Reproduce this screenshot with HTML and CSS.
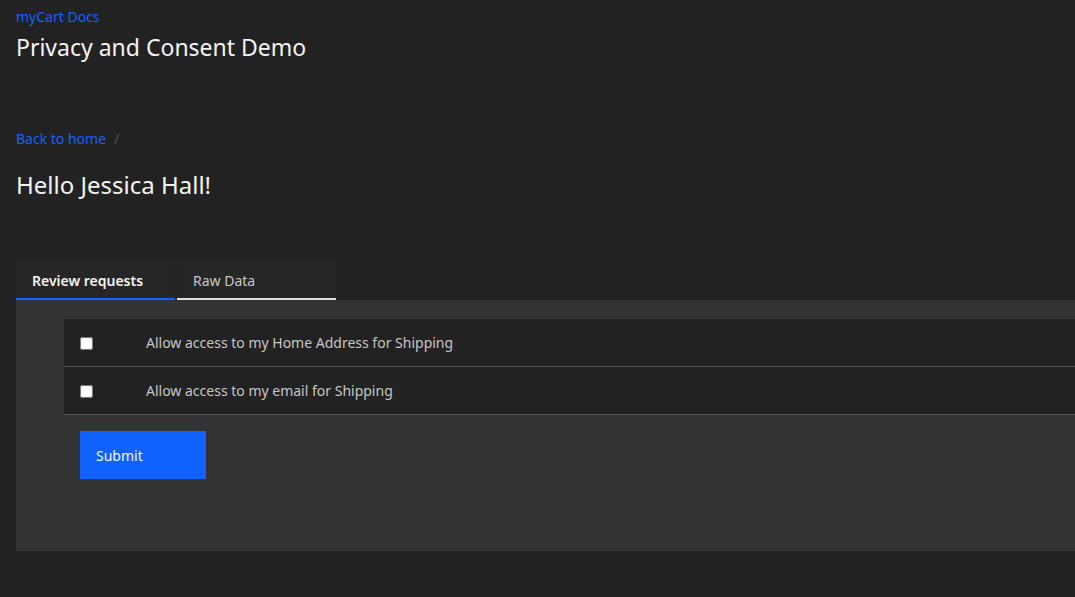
FILE: index.html
```html
<!DOCTYPE html>
<html lang="en">
<head>
<meta charset="utf-8">
<title>Privacy and Consent Demo</title>
<link rel="stylesheet" href="styles.css">
</head>
<body>
<header class="header">
  <a class="brand" href="#">myCart Docs</a>
  <h1 class="title">Privacy and Consent Demo</h1>
</header>
<nav class="breadcrumb">
  <a class="crumb" href="#">Back to home</a>
  <span class="sep">/</span>
</nav>
<h2 class="greeting">Hello Jessica Hall!</h2>
<section class="tabs-area">
  <div class="tabs">
    <div class="tab tab-active">Review requests</div>
    <div class="tab">Raw Data</div>
  </div>
  <div class="panel">
    <div class="list">
      <label class="row"><span class="cell-check"><input type="checkbox"></span><span class="row-label">Allow access to my Home Address for Shipping</span></label>
      <label class="row"><span class="cell-check"><input type="checkbox"></span><span class="row-label">Allow access to my email for Shipping</span></label>
    </div>
    <button class="submit" type="button">Submit</button>
  </div>
</section>
</body>
</html>
```
FILE: styles.css
```css
html, body {
  margin: 0;
  padding: 0;
  background: #222222;
  font-family: "Noto Sans", "Liberation Sans", sans-serif;
  color: #f4f4f4;
  overflow: hidden;
}
body {
  padding: 0 0 0 16px;
}
.header {
  padding-top: 7px;
}
.brand {
  display: block;
  color: #0f62fe;
  font-size: 14px;
  line-height: 20px;
  text-decoration: none;
}
.title {
  margin: 4px 0 0;
  font-size: 23px;
  font-weight: 400;
  line-height: 32px;
  color: #f4f4f4;
}
.breadcrumb {
  margin-top: 67px;
  display: flex;
  align-items: center;
  gap: 8px;
  font-size: 14px;
  line-height: 18px;
}
.crumb {
  color: #0f62fe;
  text-decoration: none;
}
.sep {
  color: #525252;
}
.greeting {
  margin: 21px 0 0;
  font-size: 24px;
  font-weight: 400;
  line-height: 32px;
  color: #f4f4f4;
}
.tabs-area {
  margin-top: 59px;
}
.tabs {
  display: flex;
  gap: 2px;
}
.tab {
  width: 159px;
  height: 40px;
  padding: 2px 0 0 16px;
  box-sizing: border-box;
  display: flex;
  align-items: center;
  background: #262626;
  border-bottom: 2px solid #e0e0e0;
  font-size: 14px;
  color: #c6c6c6;
}
.tab-active {
  border-bottom-color: #0f62fe;
  font-weight: 600;
  color: #f4f4f4;
}
.panel {
  background: #333333;
  padding: 19px 0 72px 48px;
}
.list {
  background: #222222;
}
.row {
  display: flex;
  align-items: center;
  height: 47px;
  border-bottom: 1px solid #555555;
}
.cell-check {
  width: 66px;
  padding: 2px 0 0 16px;
  display: flex;
  align-items: center;
}
.cell-check input {
  margin: 0;
  width: 13px;
  height: 13px;
}
.row-label {
  font-size: 14px;
  color: #c6c6c6;
}
.submit {
  margin: 16px 0 0 16px;
  width: 126px;
  height: 48px;
  border: 0;
  background: #0f62fe;
  color: #f4f4f4;
  font-family: inherit;
  font-size: 14px;
  text-align: left;
  padding: 0 16px;
}
```
